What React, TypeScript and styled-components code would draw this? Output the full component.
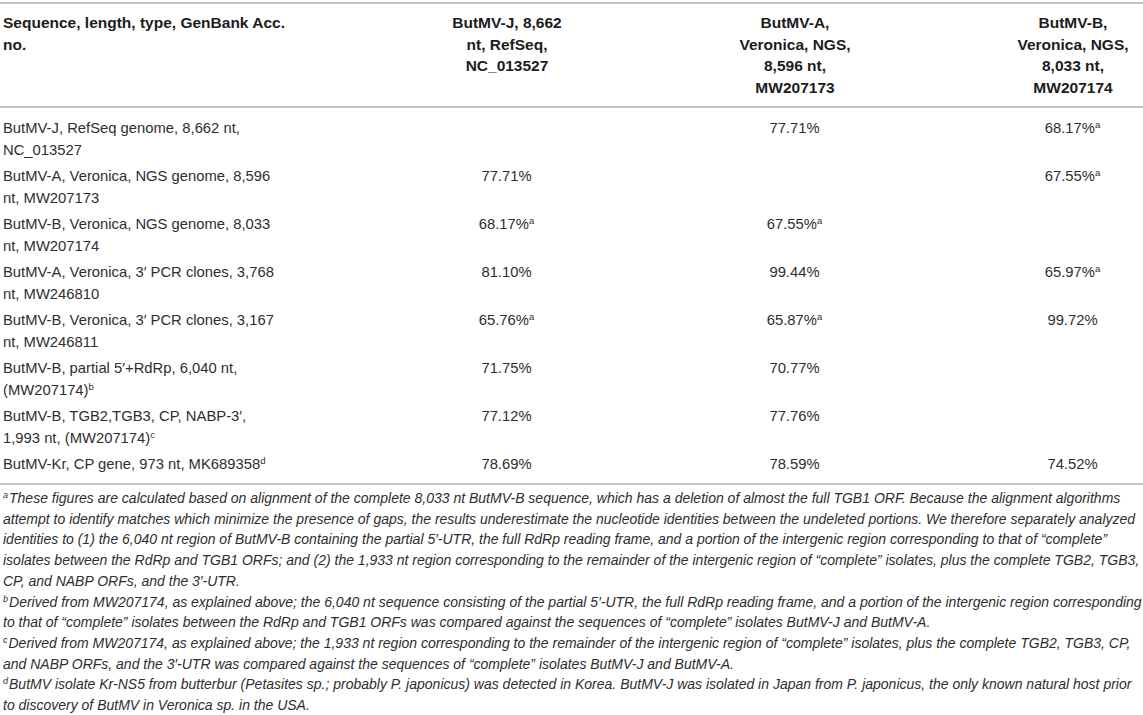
import React from "react";
import styled, { createGlobalStyle } from "styled-components";

const GlobalStyle = createGlobalStyle`
  html, body {
    margin: 0;
    padding: 0;
    background: #ffffff;
  }
  body {
    font-family: "Liberation Sans", Arial, sans-serif;
    color: #2e2e2e;
  }
`;

type Cell = { text: string; sup?: string };
type Row = { label: string[]; sup?: string; values: Cell[] };

const rows: Row[] = [
  {
    label: ["ButMV-J, RefSeq genome, 8,662 nt,", "NC_013527"],
    values: [{ text: "" }, { text: "77.71%" }, { text: "68.17%", sup: "a" }],
  },
  {
    label: ["ButMV-A, Veronica, NGS genome, 8,596", "nt, MW207173"],
    values: [{ text: "77.71%" }, { text: "" }, { text: "67.55%", sup: "a" }],
  },
  {
    label: ["ButMV-B, Veronica, NGS genome, 8,033", "nt, MW207174"],
    values: [{ text: "68.17%", sup: "a" }, { text: "67.55%", sup: "a" }, { text: "" }],
  },
  {
    label: ["ButMV-A, Veronica, 3′ PCR clones, 3,768", "nt, MW246810"],
    values: [{ text: "81.10%" }, { text: "99.44%" }, { text: "65.97%", sup: "a" }],
  },
  {
    label: ["ButMV-B, Veronica, 3′ PCR clones, 3,167", "nt, MW246811"],
    values: [{ text: "65.76%", sup: "a" }, { text: "65.87%", sup: "a" }, { text: "99.72%" }],
  },
  {
    label: ["ButMV-B, partial 5′+RdRp, 6,040 nt,", "(MW207174)"],
    sup: "b",
    values: [{ text: "71.75%" }, { text: "70.77%" }, { text: "" }],
  },
  {
    label: ["ButMV-B, TGB2,TGB3, CP, NABP-3′,", "1,993 nt, (MW207174)"],
    sup: "c",
    values: [{ text: "77.12%" }, { text: "77.76%" }, { text: "" }],
  },
  {
    label: ["ButMV-Kr, CP gene, 973 nt, MK689358"],
    sup: "d",
    values: [{ text: "78.69%" }, { text: "78.59%" }, { text: "74.52%" }],
  },
];

const headers: string[][] = [
  ["ButMV-J, 8,662", "nt, RefSeq,", "NC_013527"],
  ["ButMV-A,", "Veronica, NGS,", "8,596 nt,", "MW207173"],
  ["ButMV-B,", "Veronica, NGS,", "8,033 nt,", "MW207174"],
];

const notes: { mark: string; lines: string[] }[] = [
  {
    mark: "a",
    lines: [
      "These figures are calculated based on alignment of the complete 8,033 nt ButMV-B sequence, which has a deletion of almost the full TGB1 ORF. Because the alignment algorithms",
      "attempt to identify matches which minimize the presence of gaps, the results underestimate the nucleotide identities between the undeleted portions. We therefore separately analyzed",
      "identities to (1) the 6,040 nt region of ButMV-B containing the partial 5′-UTR, the full RdRp reading frame, and a portion of the intergenic region corresponding to that of “complete”",
      "isolates between the RdRp and TGB1 ORFs; and (2) the 1,933 nt region corresponding to the remainder of the intergenic region of “complete” isolates, plus the complete TGB2, TGB3,",
      "CP, and NABP ORFs, and the 3′-UTR.",
    ],
  },
  {
    mark: "b",
    lines: [
      "Derived from MW207174, as explained above; the 6,040 nt sequence consisting of the partial 5′-UTR, the full RdRp reading frame, and a portion of the intergenic region corresponding",
      "to that of “complete” isolates between the RdRp and TGB1 ORFs was compared against the sequences of “complete” isolates ButMV-J and ButMV-A.",
    ],
  },
  {
    mark: "c",
    lines: [
      "Derived from MW207174, as explained above; the 1,933 nt region corresponding to the remainder of the intergenic region of “complete” isolates, plus the complete TGB2, TGB3, CP,",
      "and NABP ORFs, and the 3′-UTR was compared against the sequences of “complete” isolates ButMV-J and ButMV-A.",
    ],
  },
  {
    mark: "d",
    lines: [
      "ButMV isolate Kr-NS5 from butterbur (Petasites sp.; probably P. japonicus) was detected in Korea. ButMV-J was isolated in Japan from P. japonicus, the only known natural host prior",
      "to discovery of ButMV in Veronica sp. in the USA.",
    ],
  },
];

// last data column sits toward the right edge of its cell
const LAST_SHIFT = 62;

export default function App() {
  return (
    <Page>
      <GlobalStyle />
      <Table>
        <colgroup>
          <col style={{ width: 365 }} />
          <col style={{ width: 284 }} />
          <col style={{ width: 292 }} />
          <col />
        </colgroup>
        <thead>
          <tr>
            <HeadCell $align="left">
              Sequence, length, type, GenBank Acc.
              <br />
              no.
            </HeadCell>
            {headers.map((h, i) => (
              <HeadCell key={i} $align="center" $shift={i === 2 ? LAST_SHIFT : 0}>
                {h.map((line, j) => (
                  <Line key={j}>{line}</Line>
                ))}
              </HeadCell>
            ))}
          </tr>
        </thead>
        <tbody>
          {rows.map((r, i) => (
            <BodyRow key={i} $last={i === rows.length - 1}>
              <LabelCell>
                {r.label.map((line, j) => (
                  <Line key={j}>
                    {line}
                    {r.sup && j === r.label.length - 1 && <Sup>{r.sup}</Sup>}
                  </Line>
                ))}
              </LabelCell>
              {r.values.map((v, j) => (
                <ValueCell key={j} $shift={j === 2 ? LAST_SHIFT : 0}>
                  {v.text}
                  {v.sup && <Sup>{v.sup}</Sup>}
                </ValueCell>
              ))}
            </BodyRow>
          ))}
        </tbody>
      </Table>
      <Notes>
        {notes.map((n) => (
          <Note key={n.mark}>
            {n.lines.map((line, j) => (
              <NoteLine key={j}>
                {j === 0 && <NoteMark>{n.mark}</NoteMark>}
                {line}
              </NoteLine>
            ))}
          </Note>
        ))}
      </Notes>
    </Page>
  );
}

const Page = styled.div`
  width: 1143px;
  padding-top: 2px;
`;

const Table = styled.table`
  width: 100%;
  border-collapse: collapse;
  table-layout: fixed;
  border-top: 2px solid #c4c4c4;
  border-bottom: 2px solid #c4c4c4;
  font-size: 14.8px;
  line-height: 22px;
`;

const HeadCell = styled.th<{ $align: "left" | "center"; $shift?: number }>`
  text-align: ${(p) => p.$align};
  vertical-align: top;
  font-size: 15.5px;
  line-height: 21.5px;
  font-weight: bold;
  color: #1c1c1c;
  padding: 8px 0 8px ${(p) => (p.$align === "left" ? 3 : p.$shift || 0)}px;
  border-bottom: 2px solid #c4c4c4;
`;

const Line = styled.span`
  display: block;
  white-space: nowrap;
`;

const BodyRow = styled.tr<{ $last?: boolean }>`
  & > td {
    padding-top: 4px;
    padding-bottom: ${(p) => (p.$last ? 8 : 0)}px;
  }
  &:first-child > td {
    padding-top: 9px;
  }
`;

const LabelCell = styled.td`
  vertical-align: top;
  padding-left: 3px;
  color: #2e2e2e;
`;

const ValueCell = styled.td<{ $shift?: number }>`
  vertical-align: top;
  text-align: center;
  padding-left: ${(p) => p.$shift || 0}px;
  color: #2e2e2e;
`;

const Sup = styled.sup`
  font-size: 9.5px;
  line-height: 0;
  vertical-align: 5px;
`;

const Notes = styled.div`
  padding: 3px 0 0 3px;
  font-size: 14px;
  line-height: 20.7px;
  font-style: italic;
  color: #2e2e2e;
`;

const Note = styled.div``;

const NoteLine = styled.span`
  display: block;
  white-space: nowrap;
`;

const NoteMark = styled.sup`
  font-size: 9px;
  line-height: 0;
  vertical-align: 5px;
  margin-right: 1px;
`;
